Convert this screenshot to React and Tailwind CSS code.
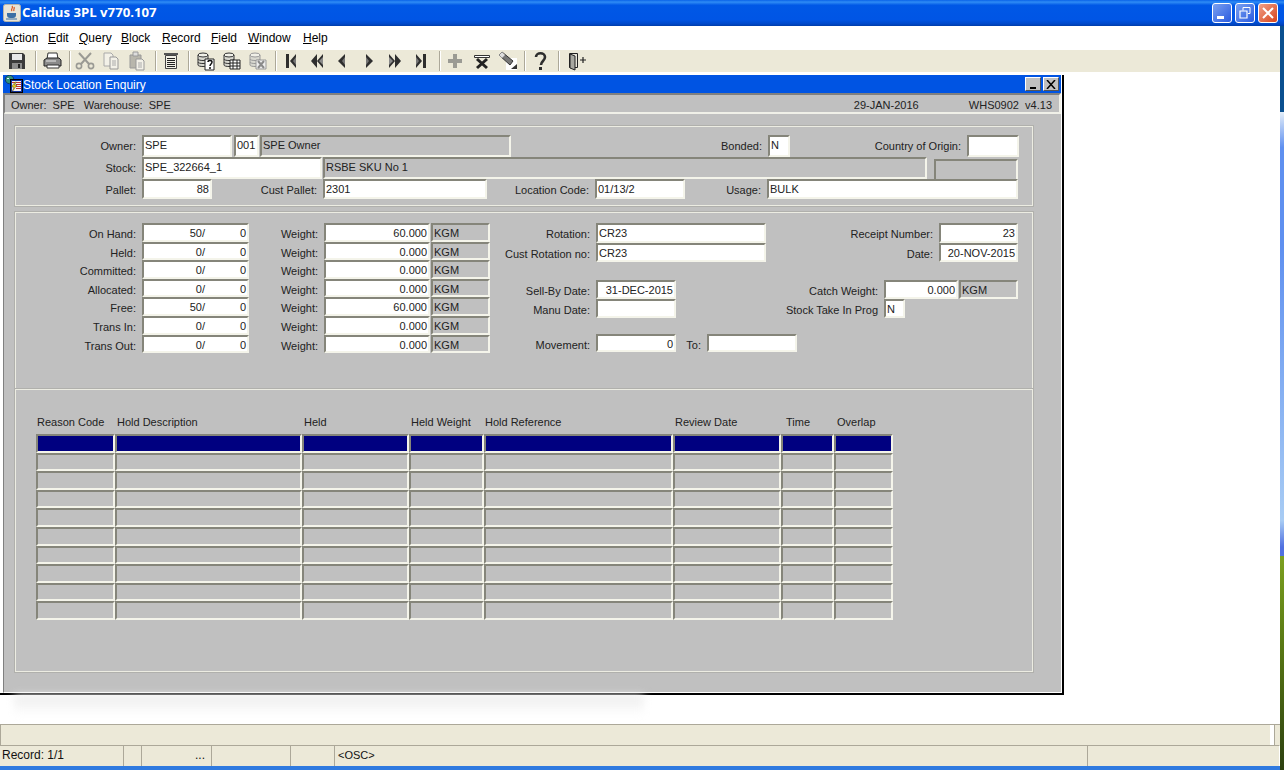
const font = "font-['Liberation_Sans',Arial,sans-serif]"

const Field = ({ w, gray, right, children, className = '' }) => (
  <div
    className={`${w} h-full shrink-0 border-2 border-t-[#85857a] border-l-[#85857a] border-r-[#f4f4ea] border-b-[#f4f4ea] ${gray ? 'bg-[#c0c0c0]' : 'bg-white'} ${right ? 'text-right pr-[1px]' : 'pl-[1px]'} leading-[16px] whitespace-pre overflow-hidden text-[11px] text-[#222] ${className}`}
  >
    {children}
  </div>
)

const Label = ({ w, children }) => (
  <div className={`${w} shrink-0 pr-[6px] text-right text-[11px] leading-[23px] text-[#222] whitespace-pre`}>{children}</div>
)

const Panel = ({ className, children }) => (
  <div className={`ml-[11px] mr-[28px] border border-[#ecece2] shadow-[0_0_0_1px_#b0b0ac] ${className}`}>{children}</div>
)

const Icon = ({ children, x = 20 }) => (
  <svg width={x} height="20" viewBox={`0 0 ${x} 20`} className="shrink-0">{children}</svg>
)

const Sep = ({ className = '' }) => <div className={`w-[2px] h-[20px] shrink-0 border-l border-[#aca899] border-r-[1px] border-r-white ${className}`} />

const SaveIcon = () => (
  <Icon>
    <path d="M2 2h14l2 2v14H2z" fill="#3a3a3a" />
    <path d="M5 3h10v6H5z" fill="#e8e8e8" />
    <path d="M5 12h10v6H5z" fill="#8c8c8c" />
    <path d="M11 13h2v4h-2z" fill="#222" />
  </Icon>
)
const PrintIcon = () => (
  <Icon>
    <path d="M6 2h9l1 6H5z" fill="#fff" stroke="#333" />
    <path d="M2 9l3-2h12l2 2v6H2z" fill="#8a8a8a" stroke="#222" />
    <path d="M5 14h12v3H5z" fill="#fff" stroke="#333" />
    <path d="M4 10h10" stroke="#e8e8e8" />
  </Icon>
)
const CutIcon = () => (
  <Icon>
    <path d="M4 2l10 11M16 2L6 13" stroke="#9a9a94" strokeWidth="2" fill="none" />
    <circle cx="4" cy="15" r="2.6" stroke="#9a9a94" strokeWidth="1.6" fill="none" />
    <circle cx="16" cy="15" r="2.6" stroke="#9a9a94" strokeWidth="1.6" fill="none" />
  </Icon>
)
const CopyIcon = () => (
  <Icon>
    <path d="M3 2h7l2 2v11H3z" fill="#f3f1e8" stroke="#aaa" />
    <path d="M9 6h6l2 2v10H9z" fill="#f3f1e8" stroke="#999" />
    <path d="M11 10h4M11 12h4M11 14h4" stroke="#aaa" />
  </Icon>
)
const PasteIcon = () => (
  <Icon>
    <path d="M3 4h11v13H3z" fill="#b8b6ac" stroke="#999" />
    <path d="M6 1h5v4H6z" fill="#ddd" stroke="#999" />
    <path d="M9 8h6l2 2v9H9z" fill="#f3f1e8" stroke="#999" />
    <path d="M11 12h4M11 14h4M11 16h4" stroke="#aaa" />
  </Icon>
)
const ListIcon = () => (
  <Icon>
    <path d="M3 2h14v2H3z" fill="#555" />
    <path d="M4.500 4.500h11v13h-11z" fill="#f2f0e6" stroke="#444" />
    <path d="M6 7.500h8M6 9.500h8M6 11.500h8M6 13.500h8M6 15.500h8" stroke="#222" />
  </Icon>
)
const Db = ({ color = '#333', fill = '#d8d8d0' }) => (
  <>
    <path d="M2 4v10c0 2 10 2 10 0V4" fill={fill} stroke={color} />
    <ellipse cx="7" cy="4" rx="5" ry="2" fill="#f0f0e8" stroke={color} />
    <path d="M2 8c0 2 10 2 10 0M2 11c0 2 10 2 10 0" stroke={color} fill="none" />
  </>
)
const QueryIcon = () => (
  <Icon>
    <Db />
    <path d="M9 8h9v11H9z" fill="#fff" stroke="#222" />
    <path d="M12 11c0-2 4-2 4 0 0 2-2 2-2 4M14 16v2" stroke="#111" strokeWidth="1.500" fill="none" />
  </Icon>
)
const ExecIcon = () => (
  <Icon>
    <Db />
    <path d="M8 9h10v9H8z" fill="#fff" stroke="#222" />
    <path d="M8 12h10M8 15h10M11 9v9M15 9v9" stroke="#222" />
  </Icon>
)
const CancelIcon = () => (
  <Icon>
    <Db color="#999" fill="#d8d8d0" />
    <path d="M8 9h10v9H8z" fill="#eee" stroke="#999" />
    <path d="M10 10l6 7M16 10l-6 7" stroke="#8a8a8a" strokeWidth="2" />
  </Icon>
)
const First = () => <Icon x={12}><path d="M1 3h3v14H1z" fill="#2e2e2e" /><path d="M11 3v14L5 10z" fill="#2e2e2e" /><path d="M11 6v8l-3-4z" fill="#777" /></Icon>
const PrevSet = () => <Icon x={14}><path d="M7 3v14L1 10zM13 3v14L7 10z" fill="#2e2e2e" /><path d="M13 6v8l-4-4z" fill="#8a8a8a" /></Icon>
const Prev = () => <Icon x={10}><path d="M8 3v14L1 10z" fill="#2e2e2e" /><path d="M8 6v8l-3-4z" fill="#777" /></Icon>
const Next = () => <Icon x={10}><path d="M2 3v14l7-7z" fill="#2e2e2e" /><path d="M2 6v8l3-4z" fill="#777" /></Icon>
const NextSet = () => <Icon x={14}><path d="M1 3v14l6-7zM7 3v14l6-7z" fill="#2e2e2e" /><path d="M1 6v8l4-4z" fill="#8a8a8a" /></Icon>
const Last = () => <Icon x={12}><path d="M1 3v14l6-7zM8 3h3v14H8z" fill="#2e2e2e" /><path d="M1 6v8l3-4z" fill="#777" /></Icon>
const PlusIcon = () => <Icon><path d="M8 3h4v5h5v4h-5v5H8v-5H3V8h5z" fill="#9b9b94" /></Icon>
const DeleteIcon = () => (
  <Icon>
    <path d="M2.500 4.500h15v2h-15z" fill="#fff" stroke="#333" />
    <path d="M5 8l10 9M15 8L5 17" stroke="#222" strokeWidth="3" />
  </Icon>
)
const EraserIcon = () => (
  <Icon>
    <path d="M8 7h11v12H8z" fill="#fff" />
    <path d="M13 18l6-5v5z" fill="#333" />
    <path d="M1 4l3-3 11 9-3 4z" fill="#777" stroke="#333" />
    <path d="M1 4l3-3 3 3-3 3z" fill="#ddd" />
  </Icon>
)
const HelpIcon = () => (
  <Icon>
    <path d="M6 6c0-5 9-5 9 0 0 4-4 4-4 8" stroke="#2e2e2e" strokeWidth="2.600" fill="none" />
    <path d="M9 16h3v3H9z" fill="#2e2e2e" />
  </Icon>
)
const ExitIcon = () => (
  <Icon>
    <path d="M2.500 2.500h8v14h-8z" fill="#e8e6da" stroke="#222" />
    <path d="M3 3l5 2v14l-5-2z" fill="#a8a8a0" stroke="#222" />
    <path d="M13 9h6M16 6v6" stroke="#222" strokeWidth="1.200" />
  </Icon>
)

const JavaIcon = () => (
  <svg width="18" height="18" viewBox="0 0 18 18" className="shrink-0">
    <rect x="0.500" y="0.500" width="17" height="17" rx="2" fill="#e8e4d8" stroke="#b8b4a8" />
    <path d="M9 2c2 2-2 3 0 5M11 3c1 2-1 2 0 4" stroke="#d9541e" strokeWidth="1.200" fill="none" />
    <path d="M4 9h9v2c0 2-1 3-3 3H7c-2 0-3-1-3-3z" fill="#3b6ea5" />
    <path d="M3 15h11" stroke="#3b6ea5" />
  </svg>
)

const FormIcon = () => (
  <svg width="18" height="18" viewBox="0 0 18 18" className="shrink-0">
    <circle cx="4.500" cy="4.500" r="4.200" fill="#2f8f7a" stroke="#0a2a5a" strokeWidth=".8" />
    <path d="M2 3h2v1H2z" fill="#e8f4ff" />
    <rect x="5.500" y="4.500" width="12" height="13" fill="#1030a0" stroke="#000" />
    <path d="M7 6h9v10H7z" fill="#f4f4f4" />
    <path d="M7 7.500h9M11 9.500h5M11 11.500h5M11 13.500h5" stroke="#c43030" />
    <path d="M10 7L6.500 12h2.500l-2 5 5-7H9.500l2-3z" fill="#f2d21e" stroke="#222" strokeWidth=".4" />
  </svg>
)

const Menu = ({ first, rest, className }) => (
  <span className={className}><span className="underline underline-offset-1">{first}</span>{rest}</span>
)

const xpButton = 'w-[20px] h-[20px] rounded-[3px] border border-white flex items-center justify-center shrink-0'

const rows = [
  ['On Hand:', '50/', '0', '60.000'],
  ['Held:', '0/', '0', '0.000'],
  ['Committed:', '0/', '0', '0.000'],
  ['Allocated:', '0/', '0', '0.000'],
  ['Free:', '50/', '0', '60.000'],
  ['Trans In:', '0/', '0', '0.000'],
  ['Trans Out:', '0/', '0', '0.000'],
]

const columns = [
  ['Reason Code', 'w-[79px]', 'pl-[1px]'],
  ['Hold Description', 'w-[187px]', 'pl-[2px]'],
  ['Held', 'w-[107px]', 'pl-[2px]'],
  ['Held Weight', 'w-[75px]', 'pl-[2px]'],
  ['Hold Reference', 'w-[189px]', 'pl-[1px]'],
  ['Review Date', 'w-[108px]', 'pl-[2px]'],
  ['Time', 'w-[53px]', 'pl-[5px]'],
  ['Overlap', 'w-[59px]', 'pl-[3px]'],
]

export default function App() {
  return (
    <div className={`w-[1284px] h-[770px] overflow-hidden flex flex-col bg-white text-[#222] ${font}`}>
      {/* main title bar */}
      <div className="h-[26px] shrink-0 flex items-center pl-[3px] pr-[6px] bg-[linear-gradient(#0a63e8_0%,#2f8cf5_8%,#0058e6_20%,#0055e5_75%,#0048c8_92%,#003ca8_100%)]">
        <JavaIcon />
        <div className="ml-[1px] text-white font-['Open_Sans',sans-serif] font-bold text-[13.2px]">Calidus 3PL v770.107</div>
        <div className="ml-auto flex gap-[3px]">
          <div className={`${xpButton} bg-[linear-gradient(135deg,#7aa0f0,#2a5be0)] items-end pb-[3px] justify-start pl-[4px]`}><div className="w-[7px] h-[3px] bg-white" /></div>
          <div className={`${xpButton} bg-[linear-gradient(135deg,#7aa0f0,#2a5be0)]`}>
            <svg width="12" height="12" viewBox="0 0 12 12"><path d="M4 .5h7v6H9M4 .5v3" stroke="#fff" fill="none" /><path d="M1 4h7v7H1z" stroke="#fff" fill="none" strokeWidth="1.200" /></svg>
          </div>
          <div className={`${xpButton} bg-[linear-gradient(135deg,#f0a088,#d8441c)]`}>
            <svg width="12" height="12" viewBox="0 0 12 12"><path d="M1 1l10 10M11 1L1 11" stroke="#fff" strokeWidth="2" /></svg>
          </div>
        </div>
      </div>

      <div className="flex-1 flex min-h-0">
        <div className="w-[1280px] flex flex-col">
          {/* menu */}
          <div className="h-[24px] shrink-0 bg-white flex items-center pl-[5px] text-[12px] text-black">
            <Menu first="A" rest="ction" className="w-[43px]" />
            <Menu first="E" rest="dit" className="w-[31px]" />
            <Menu first="Q" rest="uery" className="w-[42px]" />
            <Menu first="B" rest="lock" className="w-[41px]" />
            <Menu first="R" rest="ecord" className="w-[49px]" />
            <Menu first="F" rest="ield" className="w-[37px]" />
            <Menu first="W" rest="indow" className="w-[55px]" />
            <Menu first="H" rest="elp" />
          </div>

          {/* toolbar */}
          <div className="h-[22px] shrink-0 bg-[#ece9d8] flex items-center">
            <div className="ml-[7px]"><SaveIcon /></div>
            <Sep className="ml-[8px]" />
            <div className="ml-[5px]"><PrintIcon /></div>
            <Sep className="ml-[7px]" />
            <div className="ml-[4px]"><CutIcon /></div>
            <div className="ml-[6px]"><CopyIcon /></div>
            <div className="ml-[6px]"><PasteIcon /></div>
            <Sep className="ml-[8px]" />
            <div className="ml-[4px]"><ListIcon /></div>
            <Sep className="ml-[7px]" />
            <div className="ml-[6px]"><QueryIcon /></div>
            <div className="ml-[6px]"><ExecIcon /></div>
            <div className="ml-[6px]"><CancelIcon /></div>
            <Sep className="ml-[7px]" />
            <div className="ml-[8px]"><First /></div>
            <div className="ml-[13px]"><PrevSet /></div>
            <div className="ml-[13px]"><Prev /></div>
            <div className="ml-[17px]"><Next /></div>
            <div className="ml-[14px]"><NextSet /></div>
            <div className="ml-[13px]"><Last /></div>
            <Sep className="ml-[12px]" />
            <div className="ml-[4px]"><PlusIcon /></div>
            <div className="ml-[7px]"><DeleteIcon /></div>
            <div className="ml-[6px]"><EraserIcon /></div>
            <Sep className="ml-[6px]" />
            <div className="ml-[4px]"><HelpIcon /></div>
            <Sep className="ml-[8px]" />
            <div className="ml-[7px]"><ExitIcon /></div>
          </div>

          {/* desktop area */}
          <div className="flex-1 min-h-0 bg-white pt-[3px]">
            <div className="w-[1064px] h-[620px] pl-[3px] border-r-2 border-b-2 border-black">
              <div className="h-full bg-[#c0c0c0] border-l border-l-[#808080] border-r border-r-white border-b border-b-white flex flex-col">
                <div className="h-[18px] shrink-0 -ml-[1px] bg-[#0054e3] flex items-center pl-[2px] pr-[2px]">
                  <FormIcon />
                  <span className="pt-[1px] text-white text-[12px]">Stock Location Enquiry</span>
                  <div className="ml-auto flex gap-[2px]">
                    <div className="w-[16px] h-[14px] bg-[#c0c0c0] border border-t-white border-l-white border-r-[#555] border-b-[#555] flex items-end justify-center pb-[1px]"><div className="w-[6px] h-[2px] bg-black" /></div>
                    <div className="w-[16px] h-[14px] bg-[#c0c0c0] border border-t-white border-l-white border-r-[#555] border-b-[#555] flex items-center justify-center">
                      <svg width="10" height="9" viewBox="0 0 10 9"><path d="M1 0l8 9M9 0L1 9" stroke="#000" strokeWidth="1.500" /></svg>
                    </div>
                  </div>
                </div>
                <div className="h-[21px] shrink-0 border-t-2 border-l border-[#808080] border-b-2 border-b-[#f0f0e8] border-r-2 border-r-[#f0f0e8] flex items-center justify-between pt-[4px] pl-[6px] pr-[7px] text-[11px] text-[#222]">
                  <span className="whitespace-pre">Owner:  SPE   Warehouse:  SPE</span>
                  <div className="flex">
                    <span className="w-[115px]">29-JAN-2016</span>
                    <span className="whitespace-pre">WHS0902  v4.13</span>
                  </div>
                </div>

                {/* header block */}
                <Panel className="mt-[12px] h-[80px] flex flex-col pt-[8px]">
                  <div className="flex h-[22px]">
                    <Label w="w-[126px]">Owner:</Label>
                    <Field w="w-[90px]">SPE</Field>
                    <Field w="w-[25px]" className="ml-[2px]">001</Field>
                    <Field w="w-[251px]" gray className="ml-[1px]">SPE Owner</Field>
                    <Label w="w-[257px]">Bonded:</Label>
                    <Field w="w-[22px]">N</Field>
                    <Label w="w-[177px]">Country of Origin:</Label>
                    <Field w="w-[52px]"></Field>
                  </div>
                  <div className="flex h-[22px]">
                    <Label w="w-[126px]">Stock:</Label>
                    <Field w="w-[180px]">SPE_322664_1</Field>
                    <Field w="w-[604px]" gray className="ml-[1px]">RSBE SKU No 1</Field>
                    <Field w="w-[84px]" gray className="ml-[7px] mt-[2px]"></Field>
                  </div>
                  <div className="flex h-[20px]">
                    <Label w="w-[126px]">Pallet:</Label>
                    <Field w="w-[70px]" right>88</Field>
                    <Label w="w-[111px]">Cust Pallet:</Label>
                    <Field w="w-[164px]">2301</Field>
                    <Label w="w-[108px]">Location Code:</Label>
                    <Field w="w-[90px]">01/13/2</Field>
                    <Label w="w-[82px]">Usage:</Label>
                    <Field w="w-[251px]">BULK</Field>
                  </div>
                </Panel>

                {/* quantities block */}
                <Panel className="mt-[6px] h-[177px] flex pt-[10px]">
                  <div className="flex flex-col">
                    {rows.map((r) => (
                      <div key={r[0]} className="flex h-[18.6px]">
                        <Label w="w-[126px]">{r[0]}</Label>
                        <Field w="w-[107px]" className="flex justify-between pr-[1px]">
                          <span className="w-[60px] text-right">{r[1]}</span>
                          <span>{r[2]}</span>
                        </Field>
                        <Label w="w-[75px]">Weight:</Label>
                        <Field w="w-[106px]" right>{r[3]}</Field>
                        <Field w="w-[59px]" gray className="ml-[1px]">KGM</Field>
                      </div>
                    ))}
                  </div>
                  <div className="flex flex-col">
                    <div className="flex h-[19.5px]">
                      <Label w="w-[106px]">Rotation:</Label>
                      <Field w="w-[170px]">CR23</Field>
                    </div>
                    <div className="flex h-[19.5px]">
                      <Label w="w-[106px]">Cust Rotation no:</Label>
                      <Field w="w-[170px]">CR23</Field>
                    </div>
                    <div className="flex h-[19px] mt-[18px]">
                      <Label w="w-[106px]">Sell-By Date:</Label>
                      <Field w="w-[80px]" right>31-DEC-2015</Field>
                    </div>
                    <div className="flex h-[19px]">
                      <Label w="w-[106px]">Manu Date:</Label>
                      <Field w="w-[80px]"></Field>
                    </div>
                    <div className="flex h-[18px] mt-[16px]">
                      <Label w="w-[106px]">Movement:</Label>
                      <Field w="w-[80px]" right>0</Field>
                      <Label w="w-[31px]">To:</Label>
                      <Field w="w-[90px]"></Field>
                    </div>
                  </div>
                  <div className="flex flex-col">
                    <div className="flex h-[19.5px]">
                      <Label w="w-[142px]">Receipt Number:</Label>
                      <Field w="w-[79px]" right>23</Field>
                    </div>
                    <div className="flex h-[19.5px]">
                      <Label w="w-[142px]">Date:</Label>
                      <Field w="w-[79px]" right>20-NOV-2015</Field>
                    </div>
                    <div className="flex h-[19px] mt-[18px] -ml-[88px]">
                      <Label w="w-[175px]">Catch Weight:</Label>
                      <Field w="w-[74px]" right>0.000</Field>
                      <Field w="w-[59px]" gray className="ml-[1px]">KGM</Field>
                    </div>
                    <div className="flex h-[19px] -ml-[88px]">
                      <Label w="w-[175px]">Stock Take In Prog</Label>
                      <Field w="w-[21px]">N</Field>
                    </div>
                  </div>
                </Panel>

                {/* holds table */}
                <Panel className="h-[283px] pt-[25px] pl-[20px]">
                  <div className="flex h-[19px]">
                    {columns.map(([name, w, pad]) => (
                      <div key={name} className={`${w} ${pad} shrink-0 text-[11px] leading-[14px] whitespace-pre`}>{name}</div>
                    ))}
                  </div>
                  {Array.from({ length: 10 }).map((_, i) => (
                    <div key={i} className="flex h-[18.6px]">
                      {columns.map(([name, w]) => (
                        <div key={name} className={`${w} h-full shrink-0 border-2 border-t-[#85857a] border-l-[#85857a] border-r-[#f4f4ea] border-b-[#f4f4ea] ${i === 0 ? 'bg-[#000080]' : 'bg-[#c0c0c0]'}`} />
                      ))}
                    </div>
                  ))}
                </Panel>
              </div>
            </div>
            {/* ghost shadow left on the desktop */}
            <div className="ml-[14px] w-[630px] h-[20px] bg-[linear-gradient(#ececec,#ffffff)] blur-[4px]" />
          </div>

          {/* message line */}
          <div className="h-[21px] shrink-0 bg-[#ece9d8] border-t border-[#aca899] border-l border-l-[#aca899] flex justify-end">
            <div className="w-[5px] h-full bg-white border-r border-[#aca899]" />
            <div className="w-[5px]" />
          </div>
          {/* status line */}
          <div className="h-[21px] shrink-0 bg-[#ece9d8] border-t border-[#aca899] border-r border-r-white flex text-[12px] text-[#111] leading-[19px] whitespace-pre">
            <div className="w-[124px] pl-[2px] border-r border-[#aca899]">Record: 1/1</div>
            <div className="w-[18px] border-r border-[#aca899]" />
            <div className="w-[70px] text-right pr-[6px] border-r border-[#aca899]">...</div>
            <div className="w-[79px] border-r border-[#aca899]" />
            <div className="w-[44px] border-r border-[#aca899]" />
            <div className="w-[753px] pl-[3px] text-[11px] border-r border-[#aca899]">{'<OSC>'}</div>
            <div className="flex-1" />
          </div>
          <div className="h-[4px] shrink-0 bg-[#2f7ae0]" />
        </div>

        {/* sliver of desktop behind the maximised window */}
        <div className="w-[4px] h-full flex flex-col">
          <div className="h-[86px] bg-[#0a5090]" />
          <div className="h-[444px] bg-[linear-gradient(#e4eef8_0%,#5f90f0_8%,#5f90f0_30%,#a8ccf4_92%,#5070e0_98%)]" />
          <div className="flex-1 bg-[linear-gradient(#7ca020,#5a7a14_40%,#2c4010)]" />
        </div>
      </div>
    </div>
  )
}
